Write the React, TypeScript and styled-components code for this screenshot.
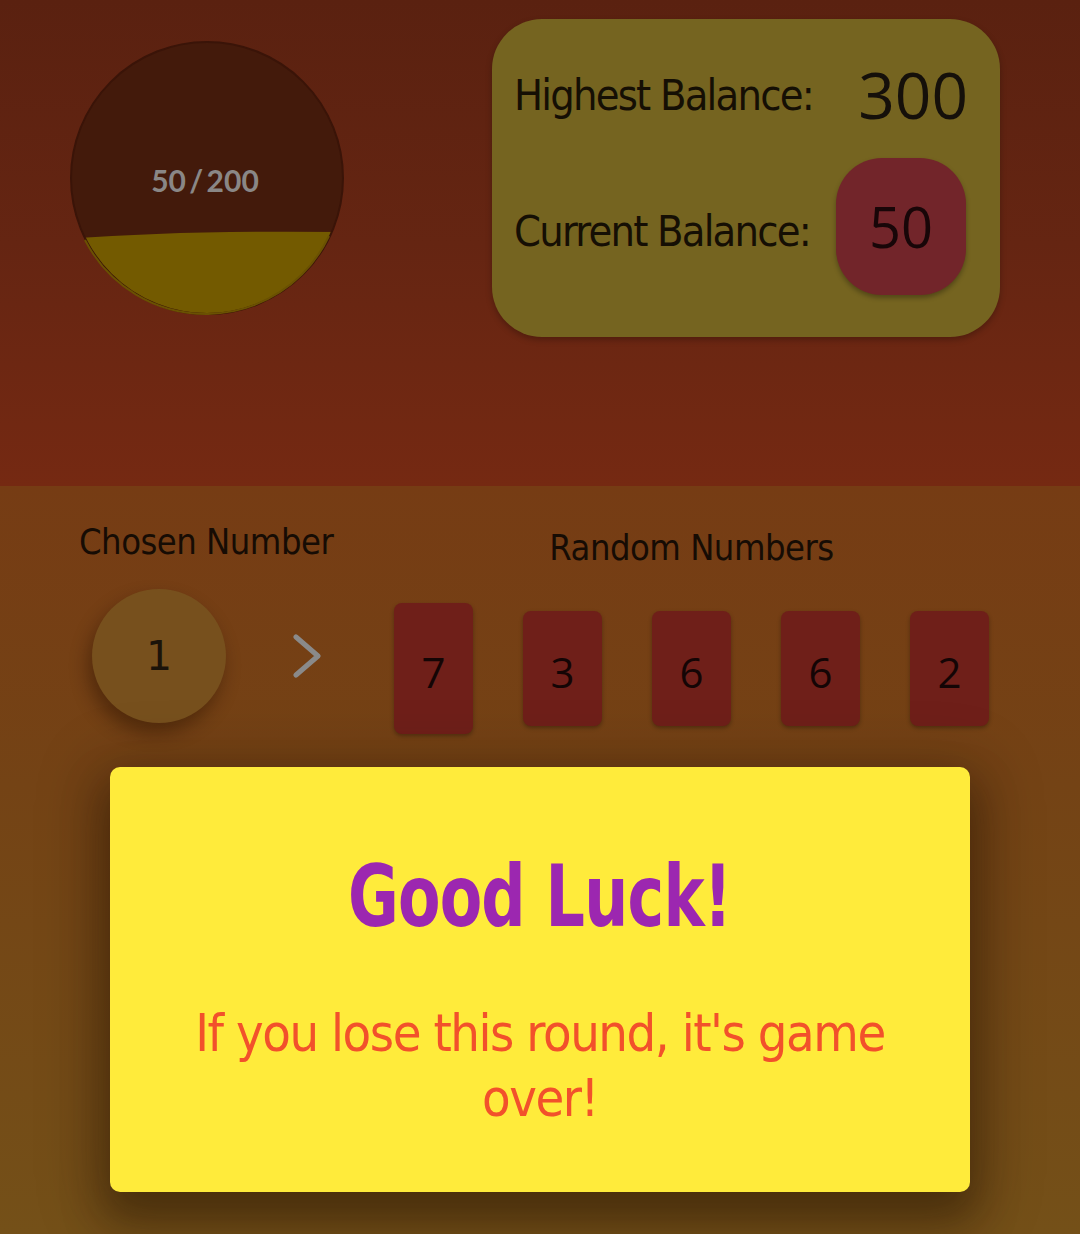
import React from "react";
import styled, { createGlobalStyle } from "styled-components";

const Global = createGlobalStyle`
  html, body { margin: 0; padding: 0; }
  body {
    width: 1080px;
    height: 1234px;
    overflow: hidden;
    background: #745018;
    font-family: "DejaVu Sans Condensed", "DejaVu Sans", sans-serif;
  }
`;

const NARROW = `"DejaVu Sans Condensed", "DejaVu Sans", sans-serif`;

const Page = styled.div`
  position: relative;
  width: 1080px;
  height: 1234px;
  display: flex;
  flex-direction: column;
`;

const TopSection = styled.section`
  height: 486px;
  flex-shrink: 0;
  background: linear-gradient(180deg, #5a2110 0%, #652512 50%, #752912 100%);
  display: flex;
  justify-content: space-between;
  align-items: flex-start;
  padding: 19px 80px 0 69px;
  box-sizing: border-box;
`;

const Gauge = styled.div`
  position: relative;
  width: 276px;
  height: 276px;
  margin-top: 21px;
`;

const GaugeLabel = styled.span`
  position: absolute;
  left: 0;
  right: 0;
  top: 122px;
  text-align: center;
  font-family: Lato, "Open Sans", sans-serif;
  font-weight: 700;
  font-size: 30px;
  line-height: 36px;
  color: #8a8786;
  word-spacing: -4px;
  padding-right: 4px;
`;

const BalanceCard = styled.div`
  width: 508px;
  height: 318px;
  box-sizing: border-box;
  background: #756420;
  border-radius: 50px;
  box-shadow: 0 3px 6px rgba(0, 0, 0, 0.25);
  padding: 44px 34px 42px 22px;
  display: flex;
  flex-direction: column;
  gap: 31px;
`;

const BalanceRow = styled.div<{ $h: number }>`
  height: ${(p) => p.$h}px;
  display: flex;
  align-items: center;
  justify-content: space-between;
`;

const BalanceLabel = styled.span<{ $shift?: number }>`
  margin-top: ${(p) => p.$shift ?? 0}px;
  font-family: ${NARROW};
  font-size: 43px;
  line-height: 1;
  color: #150f04;
  letter-spacing: -1.8px;
  white-space: nowrap;
`;

const HighestValue = styled.span`
  font-family: "Open Sans", "Liberation Sans", sans-serif;
  font-size: 64px;
  line-height: 64px;
  color: #15100a;
  margin-right: -2px;
`;

const CurrentValue = styled.div`
  flex-shrink: 0;
  width: 130px;
  height: 137px;
  border-radius: 46px;
  background: #72252a;
  box-shadow: 0 3px 5px rgba(0, 0, 0, 0.3);
  display: flex;
  align-items: center;
  justify-content: center;
  padding-bottom: 2px;
  box-sizing: border-box;
  font-family: "Open Sans", "Liberation Sans", sans-serif;
  font-size: 56px;
  color: #180608;
`;

const BottomSection = styled.section`
  flex: 1;
  background: linear-gradient(180deg, #763c14 0%, #744315 40%, #745018 100%);
  display: flex;
  align-items: flex-start;
  padding: 37px 0 0 79px;
  box-sizing: border-box;
`;

const ChosenGroup = styled.div`
  display: flex;
  flex-direction: column;
  width: 315px;
`;

const SectionHeading = styled.h2<{ $top: number }>`
  margin: ${(p) => p.$top}px 0 0 0;
  font-family: ${NARROW};
  font-weight: 400;
  font-size: 36px;
  line-height: 38px;
  color: #160c04;
  letter-spacing: -0.5px;
  white-space: nowrap;
`;

const ChosenRow = styled.div`
  display: flex;
  align-items: center;
  margin-top: 28px;
  padding-left: 13px;
  gap: 65px;
`;

const ChosenCircle = styled.div`
  width: 134px;
  height: 134px;
  border-radius: 50%;
  background: #77501d;
  box-shadow: -4px 10px 18px rgba(40, 15, 0, 0.45);
  display: flex;
  align-items: center;
  justify-content: center;
  font-family: "DejaVu Sans", sans-serif;
  font-size: 41px;
  color: #1b130a;
`;

const RandomGroup = styled.div`
  display: flex;
  flex-direction: column;
  align-items: center;
`;

const CardRow = styled.div`
  display: flex;
  align-items: center;
  gap: 50px;
  margin-top: 36px;
`;

const NumberCard = styled.div<{ $tall?: boolean }>`
  width: 79px;
  height: ${(p) => (p.$tall ? 131 : 115)}px;
  border-radius: 8px;
  background: #6f1f19;
  box-shadow: 0 2px 4px rgba(0, 0, 0, 0.3);
  display: flex;
  align-items: center;
  justify-content: center;
  padding-top: 6px;
  box-sizing: border-box;
  font-family: "Open Sans", "DejaVu Sans", sans-serif;
  font-size: 42px;
  color: #140505;
`;

const Overlay = styled.div`
  position: absolute;
  inset: 0;
  display: flex;
  flex-direction: column;
  justify-content: flex-end;
  align-items: center;
  padding-bottom: 42px;
  box-sizing: border-box;
`;

const Dialog = styled.div`
  width: 860px;
  height: 425px;
  box-sizing: border-box;
  background: #ffeb3b;
  border-radius: 10px;
  box-shadow: 0 24px 40px 6px rgba(30, 15, 0, 0.35),
    0 10px 60px 14px rgba(30, 15, 0, 0.25);
  display: flex;
  flex-direction: column;
  align-items: center;
  padding-top: 86px;
  text-align: center;
`;

const DialogTitle = styled.h1`
  margin: 0;
  font-family: ${NARROW};
  font-weight: 700;
  font-size: 86px;
  line-height: 86px;
  color: #9c27b0;
  letter-spacing: -1px;
  white-space: nowrap;
  transform: scaleX(0.8);
`;

const DialogText = styled.p`
  margin: 62px 0 0 0;
  width: 720px;
  font-family: ${NARROW};
  font-size: 52px;
  line-height: 65px;
  color: #f2512b;
  letter-spacing: -1.45px;
`;

function Chevron() {
  return (
    <svg width="30" height="44" viewBox="0 0 30 44">
      <path
        d="M5 3 L27 22 L5 41"
        fill="none"
        stroke="#8a8a8a"
        strokeWidth="5"
        strokeLinecap="round"
        strokeLinejoin="round"
      />
    </svg>
  );
}

function BalanceGauge({ value, max }: { value: number; max: number }) {
  return (
    <Gauge>
      <svg width="276" height="276" viewBox="0 0 276 276">
        <defs>
          <clipPath id="gclip">
            <circle cx="138" cy="138" r="136" />
          </clipPath>
        </defs>
        <circle cx="138" cy="138" r="136" fill="#431a0b" />
        <g clipPath="url(#gclip)">
          <path d="M0 199 Q 110 190 276 192 L276 280 L0 280 Z" fill="#735a00" />
        </g>
        <circle cx="138" cy="138" r="136" fill="none" stroke="#3a1408" strokeWidth="2" />
        <path
          d="M16 200 A136 136 0 0 0 260 196"
          fill="none"
          stroke="#6a5102"
          strokeWidth="2"
        />
      </svg>
      <GaugeLabel>
        {value} / {max}
      </GaugeLabel>
    </Gauge>
  );
}

export default function App() {
  const randoms = [7, 3, 6, 6, 2];
  return (
    <>
      <Global />
      <Page>
        <TopSection>
          <BalanceGauge value={50} max={200} />
          <BalanceCard>
            <BalanceRow $h={64}>
              <BalanceLabel>Highest Balance:</BalanceLabel>
              <HighestValue>300</HighestValue>
            </BalanceRow>
            <BalanceRow $h={137}>
              <BalanceLabel $shift={10}>Current Balance:</BalanceLabel>
              <CurrentValue>50</CurrentValue>
            </BalanceRow>
          </BalanceCard>
        </TopSection>
        <BottomSection>
          <ChosenGroup>
            <SectionHeading $top={0}>Chosen Number</SectionHeading>
            <ChosenRow>
              <ChosenCircle>1</ChosenCircle>
              <Chevron />
            </ChosenRow>
          </ChosenGroup>
          <RandomGroup>
            <SectionHeading $top={6}>Random Numbers</SectionHeading>
            <CardRow>
              {randoms.map((n, i) => (
                <NumberCard key={i} $tall={i === 0}>
                  {n}
                </NumberCard>
              ))}
            </CardRow>
          </RandomGroup>
        </BottomSection>
        <Overlay>
          <Dialog>
            <DialogTitle>Good Luck!</DialogTitle>
            <DialogText>If you lose this round, it's game over!</DialogText>
          </Dialog>
        </Overlay>
      </Page>
    </>
  );
}
